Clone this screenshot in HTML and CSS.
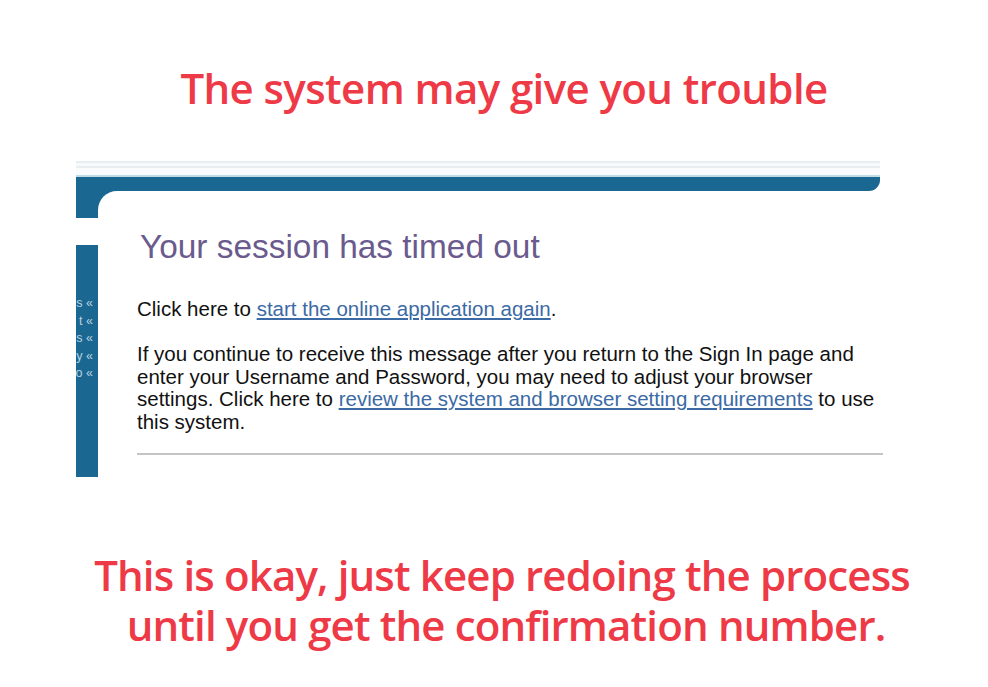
FILE: index.html
```html
<!DOCTYPE html>
<html lang="en">
<head>
<meta charset="utf-8">
<title>Session timed out</title>
<link rel="stylesheet" href="styles.css">
</head>
<body>
<main class="page">
  <h1 class="caption caption-top">The system may give you trouble</h1>

  <section class="shot">
    <div class="rules"></div>
    <div class="bar"></div>
    <div class="frame">
      <aside class="side">
        <div class="side-cap"></div>
        <div class="side-gap"></div>
        <nav class="side-nav">
          <span class="side-link">s «</span>
          <span class="side-link">t «</span>
          <span class="side-link">s «</span>
          <span class="side-link">y «</span>
          <span class="side-link">o «</span>
        </nav>
      </aside>
      <div class="panel">
        <h2 class="panel-title">Your session has timed out</h2>
        <p class="panel-text">Click here to <a class="panel-link" href="#">start the online application again</a>.</p>
        <p class="panel-text panel-text-long">If you continue to receive this message after you return to the Sign In page and<br>enter your Username and Password, you may need to adjust your browser<br>settings. Click here to <a class="panel-link" href="#">review the system and browser setting requirements</a> to use<br>this system.</p>
        <hr class="panel-rule">
      </div>
    </div>
  </section>

  <p class="caption caption-bottom"><span class="caption-line">This is okay, just keep redoing the process</span><span class="caption-line caption-line-2">until you get the confirmation number.</span></p>
</main>
</body>
</html>
```

FILE: styles.css
```css
html, body {
  margin: 0;
  padding: 0;
  background: #ffffff;
}

.page {
  width: 988px;
  height: 687px;
  overflow: hidden;
  padding-top: 63px;
  box-sizing: border-box;
  display: flex;
  flex-direction: column;
}

.caption {
  margin: 0;
  font-family: "Open Sans", "Noto Sans", sans-serif;
  font-weight: 600;
  color: #ee3a46;
  text-align: center;
  font-size: 42px;
  line-height: 50px;
  letter-spacing: -0.6px;
}

.caption-top {
  margin-bottom: 47px;
  padding-left: 20px;
}

.caption-bottom {
  margin-top: 73px;
  padding-left: 16px;
  letter-spacing: -0.85px;
  display: flex;
  flex-direction: column;
  align-items: center;
}

.caption-line {
  display: block;
}

.caption-line-2 {
  padding-left: 8px;
}

/* ---- embedded screenshot ---- */
.shot {
  margin-left: 76px;
  width: 804px;
  font-family: "Liberation Sans", Arial, sans-serif;
}

.rules {
  height: 17px;
  background: linear-gradient(to bottom,
    #ffffff 0, #ffffff 1px,
    #e9eef1 1px, #e9eef1 3px,
    #f7f9fa 3px, #f7f9fa 6px,
    #e9eef1 6px, #e9eef1 8px,
    #fafbfc 8px, #fafbfc 15px,
    #c3dbe6 15px, #c3dbe6 17px);
}

.bar {
  height: 14px;
  background: #1a6891;
  border-bottom-right-radius: 11px;
}

.frame {
  display: flex;
  height: 286px;
  background: linear-gradient(#1a6891, #1a6891) no-repeat 0 0 / 60px 30px;
}

.side {
  width: 22px;
  flex: none;
  display: flex;
  flex-direction: column;
}

.side-cap {
  height: 27px;
  background: #1a6891;
}

.side-gap {
  height: 27px;
  background: #ffffff;
}

.side-nav {
  flex: 1;
  background: #1a6891;
  display: flex;
  flex-direction: column;
  align-items: flex-end;
  padding: 50px 5px 0 0;
}

.side-link {
  font-size: 12.5px;
  line-height: 17.5px;
  color: #bad2e2;
  white-space: nowrap;
}

.panel {
  flex: 1;
  background: #ffffff;
  border-top-left-radius: 19px;
  padding: 37px 0 0 39px;
}

.panel-title {
  margin: 0 0 32px;
  padding-left: 3px;
  font-weight: 400;
  font-size: 33.4px;
  line-height: 38px;
  color: #6a5a8d;
}

.panel-text {
  margin: 0 0 22.5px;
  font-size: 20.5px;
  line-height: 22.5px;
  color: #111111;
  white-space: nowrap;
}

.panel-text-long {
  margin-bottom: 20px;
}

.panel-link {
  color: #3c6aa4;
  text-decoration: underline;
  text-underline-offset: 2px;
}

.panel-rule {
  margin: 0 -3px 0 0;
  border: 0;
  height: 2px;
  background: #c4c4c4;
}
```
